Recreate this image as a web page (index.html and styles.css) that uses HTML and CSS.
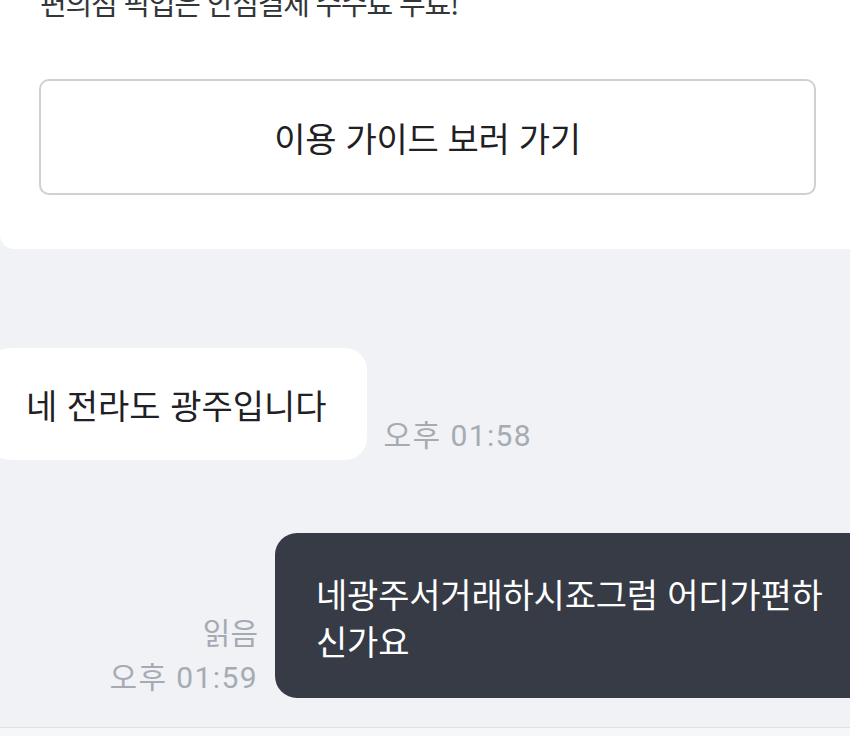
FILE: index.html
```html
<!DOCTYPE html>
<html lang="ko">
<head>
<meta charset="utf-8">
<link rel="stylesheet" href="styles.css">
</head>
<body>
<div class="screen">
  <section class="card">
    <p class="notice">편의점 픽업은 안심결제 수수료 무료!</p>
    <div class="guide-btn">이용 가이드 보러 가기</div>
  </section>
  <section class="chat">
    <div class="row row-in">
      <div class="bubble bubble-in">네 전라도 광주입니다</div>
      <div class="meta"><span class="time">오후 01:58</span></div>
    </div>
    <div class="row row-out">
      <div class="meta meta-out">
        <span class="read">읽음</span>
        <span class="time">오후 01:59</span>
      </div>
      <div class="bubble bubble-out">네광주서거래하시죠그럼 어디가편하신가요</div>
    </div>
  </section>
  <div class="footer"></div>
</div>
</body>
</html>
```

FILE: styles.css
```css
* { box-sizing: border-box; }
html, body {
  margin: 0;
  padding: 0;
  width: 850px;
  height: 736px;
  overflow: hidden;
  background: #f0f2f5;
  font-family: "Noto Sans CJK KR", "Noto Sans", sans-serif;
}
.screen {
  display: flex;
  flex-direction: column;
  width: 850px;
  height: 736px;
  overflow: hidden;
}
.card {
  background: #ffffff;
  height: 249px;
  flex: none;
  border-bottom-left-radius: 14px;
  padding: 0 34px 0 39px;
  display: flex;
  flex-direction: column;
}
.notice {
  margin: -16px 0 0 1px;
  font-size: 29px;
  line-height: 36px;
  letter-spacing: -1.2px;
  color: #333639;
}
.guide-btn {
  margin-top: 59px;
  height: 116px;
  border: 2px solid #cdd0d5;
  border-radius: 10px;
  display: flex;
  align-items: center;
  justify-content: center;
  font-size: 34px;
  letter-spacing: -0.3px;
  color: #1f2124;
}
.chat {
  flex: 1;
  display: flex;
  flex-direction: column;
  padding-top: 99px;
}
.row {
  display: flex;
  align-items: flex-end;
}
.row-in {
  gap: 17px;
}
.bubble-in {
  flex: none;
  background: #ffffff;
  height: 112px;
  margin-left: -12px;
  padding: 0 40px 0 38px;
  border-radius: 22px;
  display: flex;
  align-items: center;
  font-size: 34px;
  letter-spacing: 0;
  color: #1f2124;
}
.meta {
  flex: none;
  display: flex;
  flex-direction: column;
  align-items: flex-end;
  white-space: nowrap;
  color: #a6abb3;
  font-family: Roboto, "Noto Sans CJK KR", sans-serif;
  font-size: 30px;
  letter-spacing: 1.4px;
  line-height: 44px;
}
.row-in .meta {
  padding-bottom: 2px;
}
.row-out {
  margin-top: 73px;
  gap: 17px;
  padding-left: 104px;
}
.meta-out {
  width: 154px;
  margin-bottom: -2px;
}
.meta-out .read {
  letter-spacing: 0;
}
.bubble-out {
  flex: none;
  width: 601px;
  background: #363b45;
  color: #ffffff;
  border-radius: 22px;
  padding: 37px 40px 34px 41px;
  font-size: 34px;
  line-height: 47px;
  letter-spacing: -0.2px;
}
.footer {
  flex: none;
  height: 9px;
  background: #f6f7f9;
  border-top: 1px solid #dfe1e5;
}
```
